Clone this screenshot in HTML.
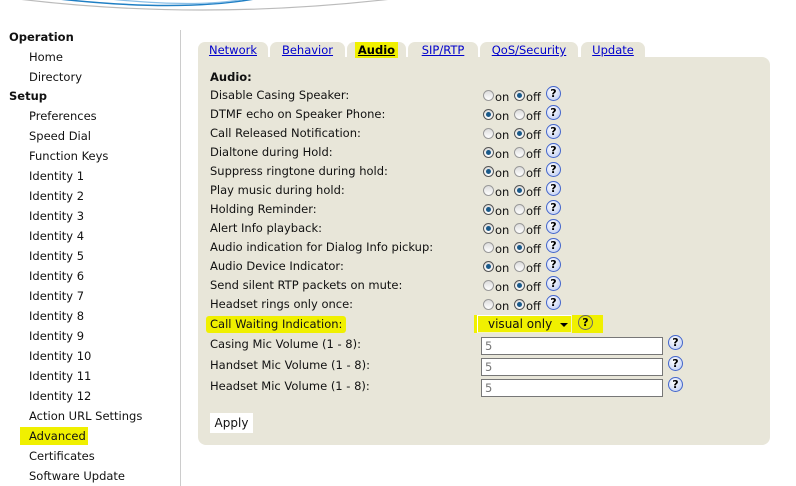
<!DOCTYPE html>
<html><head><meta charset="utf-8"><style>
*{margin:0;padding:0;box-sizing:border-box}
body{width:796px;height:486px;background:#fff;position:relative;overflow:hidden;font-family:"DejaVu Sans","Liberation Sans",sans-serif;font-size:11.5px;color:#111}
.a{position:absolute;white-space:nowrap}
.h{font-weight:bold}
.vl{position:absolute;left:180px;top:30px;width:1px;height:456px;background:#ccc}
.panel{position:absolute;left:198px;top:57px;width:572px;height:388px;background:#e8e6d9;border-radius:0 8px 8px 8px}
.tab{position:absolute;top:42px;height:18px;background:#e8e6d9;border-radius:7px 7px 0 0;text-align:center;line-height:17px}
.tab a{color:#00c;text-decoration:underline}
.hl{background:#f0f000}
.rad{position:absolute;width:11px;height:11px;border-radius:50%;border:1px solid #999;background:linear-gradient(#ddd,#fff)}
.rad.on::after{content:"";position:absolute;left:2px;top:2px;width:5px;height:5px;border-radius:50%;background:#1a5a8a}
.rad.on{border-color:#555}
.q{position:absolute;width:15px;height:15px;border-radius:50%;border:1px solid #4466cc;background:radial-gradient(circle at 40% 35%,#fff,#b8c8f0);font-weight:bold;font-size:11px;line-height:13px;text-align:center;color:#000}
.inp{position:absolute;left:481px;width:182px;height:18px;background:#fff;border:1px solid #777;color:#777;padding-left:3px;line-height:16px;font-size:11.5px}
</style></head><body>
<svg class="a" style="left:0;top:0" width="420" height="20"><path d="M10 -2 Q200 22 400 -2" stroke="#bbb" stroke-width="1.2" fill="none"/><path d="M50 -2 Q180 13 260 -2" stroke="#1f7fc4" stroke-width="1.5" fill="none"/><path d="M100 -2 Q200 9 250 -2" stroke="#8cc0e8" stroke-width="1.2" fill="none"/></svg>
<div class="vl"></div>
<div class="a h" style="left:9px;top:30px">Operation</div>
<div class="a" style="left:29px;top:50px">Home</div>
<div class="a" style="left:29px;top:70px">Directory</div>
<div class="a h" style="left:9px;top:89px">Setup</div>
<div class="a" style="left:29px;top:109px">Preferences</div>
<div class="a" style="left:29px;top:129px">Speed Dial</div>
<div class="a" style="left:29px;top:149px">Function Keys</div>
<div class="a" style="left:29px;top:169px">Identity 1</div>
<div class="a" style="left:29px;top:189px">Identity 2</div>
<div class="a" style="left:29px;top:209px">Identity 3</div>
<div class="a" style="left:29px;top:229px">Identity 4</div>
<div class="a" style="left:29px;top:249px">Identity 5</div>
<div class="a" style="left:29px;top:269px">Identity 6</div>
<div class="a" style="left:29px;top:289px">Identity 7</div>
<div class="a" style="left:29px;top:309px">Identity 8</div>
<div class="a" style="left:29px;top:329px">Identity 9</div>
<div class="a" style="left:29px;top:349px">Identity 10</div>
<div class="a" style="left:29px;top:369px">Identity 11</div>
<div class="a" style="left:29px;top:389px">Identity 12</div>
<div class="a" style="left:29px;top:409px">Action URL Settings</div>
<div class="a hl" style="left:20px;top:427px;width:68px;height:18px"></div>
<div class="a" style="left:29px;top:429px">Advanced</div>
<div class="a" style="left:29px;top:449px">Certificates</div>
<div class="a" style="left:29px;top:469px">Software Update</div>

<div class="panel"></div>
<div class="tab" style="left:198px;width:70px"><a>Network</a></div>
<div class="tab" style="left:270px;width:75px"><a>Behavior</a></div>
<div class="tab" style="left:347px;width:59px"><span class="hl" style="padding:1px 3px"><a style="color:#000;font-weight:bold">Audio</a></span></div>
<div class="tab" style="left:408px;width:70px"><a>SIP/RTP</a></div>
<div class="tab" style="left:480px;width:98px"><a>QoS/Security</a></div>
<div class="tab" style="left:581px;width:64px"><a>Update</a></div>

<div class="a h" style="left:210px;top:70px">Audio:</div>
<div id="rows"></div>
<div class="a hl" style="left:206px;top:316px;width:140px;height:17px;border-radius:3px"></div>
<div class="a" style="left:210px;top:317px">Call Waiting Indication:</div>
<div class="a" style="left:210px;top:337px">Casing Mic Volume (1 - 8):</div>
<div class="a" style="left:210px;top:358px">Handset Mic Volume (1 - 8):</div>
<div class="a" style="left:210px;top:379px">Headset Mic Volume (1 - 8):</div>
<div class="a hl" style="left:474px;top:315px;width:129px;height:18px"></div>
<div class="a" style="left:477px;top:315px;width:95px;height:18px;border:1px solid #f4f4c0;border-left-color:#fff;border-top-color:#fff"></div>
<div class="a" style="left:488px;top:317px;font-size:12px">visual only</div>
<div class="a" style="left:560px;top:323px;width:0;height:0;border-left:4px solid transparent;border-right:4px solid transparent;border-top:4px solid #000"></div>
<div class="q" style="left:578px;top:315px;border-color:#666;background:#e8e800">?</div>
<div class="inp" style="top:337px">5</div>
<div class="inp" style="top:358px">5</div>
<div class="inp" style="top:379px">5</div>
<div class="q" style="left:668px;top:335px">?</div>
<div class="q" style="left:668px;top:356px">?</div>
<div class="q" style="left:668px;top:377px">?</div>
<div class="a" style="left:210px;top:413px;width:43px;height:20px;background:#fff;line-height:20px;text-align:center;font-size:12px">Apply</div>
<script>
var L=["Disable Casing Speaker:",0,"DTMF echo on Speaker Phone:",1,"Call Released Notification:",0,"Dialtone during Hold:",1,"Suppress ringtone during hold:",1,"Play music during hold:",0,"Holding Reminder:",1,"Alert Info playback:",1,"Audio indication for Dialog Info pickup:",0,"Audio Device Indicator:",1,"Send silent RTP packets on mute:",0,"Headset rings only once:",0];
var h="";
for(var i=0;i<12;i++){var y=88+i*19,on=L[i*2+1];
h+='<div class="a" style="left:210px;top:'+y+'px">'+L[i*2]+'</div>';
h+='<div class="rad'+(on?' on':'')+'" style="left:483px;top:'+(y+2)+'px"></div><div class="a" style="left:495px;top:'+(y+2)+'px">on</div>';
h+='<div class="rad'+(on?'':' on')+'" style="left:514px;top:'+(y+2)+'px"></div><div class="a" style="left:526px;top:'+(y+2)+'px">off</div>';
h+='<div class="q" style="left:546px;top:'+(y-2)+'px">?</div>';}
document.getElementById("rows").innerHTML=h;
</script>
</body></html>
